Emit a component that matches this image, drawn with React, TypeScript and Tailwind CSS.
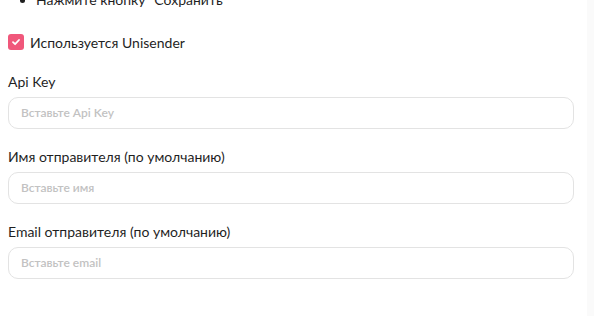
import React from "react";

function Field({ label, placeholder }: { label: string; placeholder: string }) {
  return (
    <div className="flex flex-col">
      <label className="text-[14px] leading-[20px] text-[#1f1f1f] h-[20px]">{label}</label>
      <div className="mt-[5px] h-[32px] w-[566px] rounded-[10px] border border-[#e3e3e3] bg-white flex items-center px-[12px]">
        <span className="text-[12px] font-semibold text-[#c2c2c2]">{placeholder}</span>
      </div>
    </div>
  );
}

export default function App() {
  return (
    <div className="w-[594px] h-[316px] bg-white overflow-hidden relative" style={{ fontFamily: "Lato, 'Noto Sans', sans-serif" }}>
      <div className="absolute right-0 top-0 h-full w-[7px] bg-[#fafafa]" />
      <div className="pl-[8px] -mt-[10px]">
        <ul className="list-disc pl-[28px] text-[14px] leading-[20px] text-[#1f1f1f]">
          <li>Нажмите кнопку "Сохранить"</li>
        </ul>
        <div className="mt-[24px] flex items-center gap-[6px] h-[16px]">
          <div className="w-[16px] h-[16px] rounded-[3px] bg-[#f0577b] flex items-center justify-center">
            <svg width="10" height="10" viewBox="0 0 10 10" fill="none">
              <path d="M2 5.2 L4.1 7.2 L8 3" stroke="white" strokeWidth="1.8" strokeLinecap="round" strokeLinejoin="round" />
            </svg>
          </div>
          <span className="text-[14px] text-[#1f1f1f]">Используется Unisender</span>
        </div>
        <div className="mt-[22px] flex flex-col gap-[18px]">
          <Field label="Api Key" placeholder="Вставьте Api Key" />
          <Field label="Имя отправителя (по умолчанию)" placeholder="Вставьте имя" />
          <Field label="Email отправителя (по умолчанию)" placeholder="Вставьте email" />
        </div>
      </div>
    </div>
  );
}
